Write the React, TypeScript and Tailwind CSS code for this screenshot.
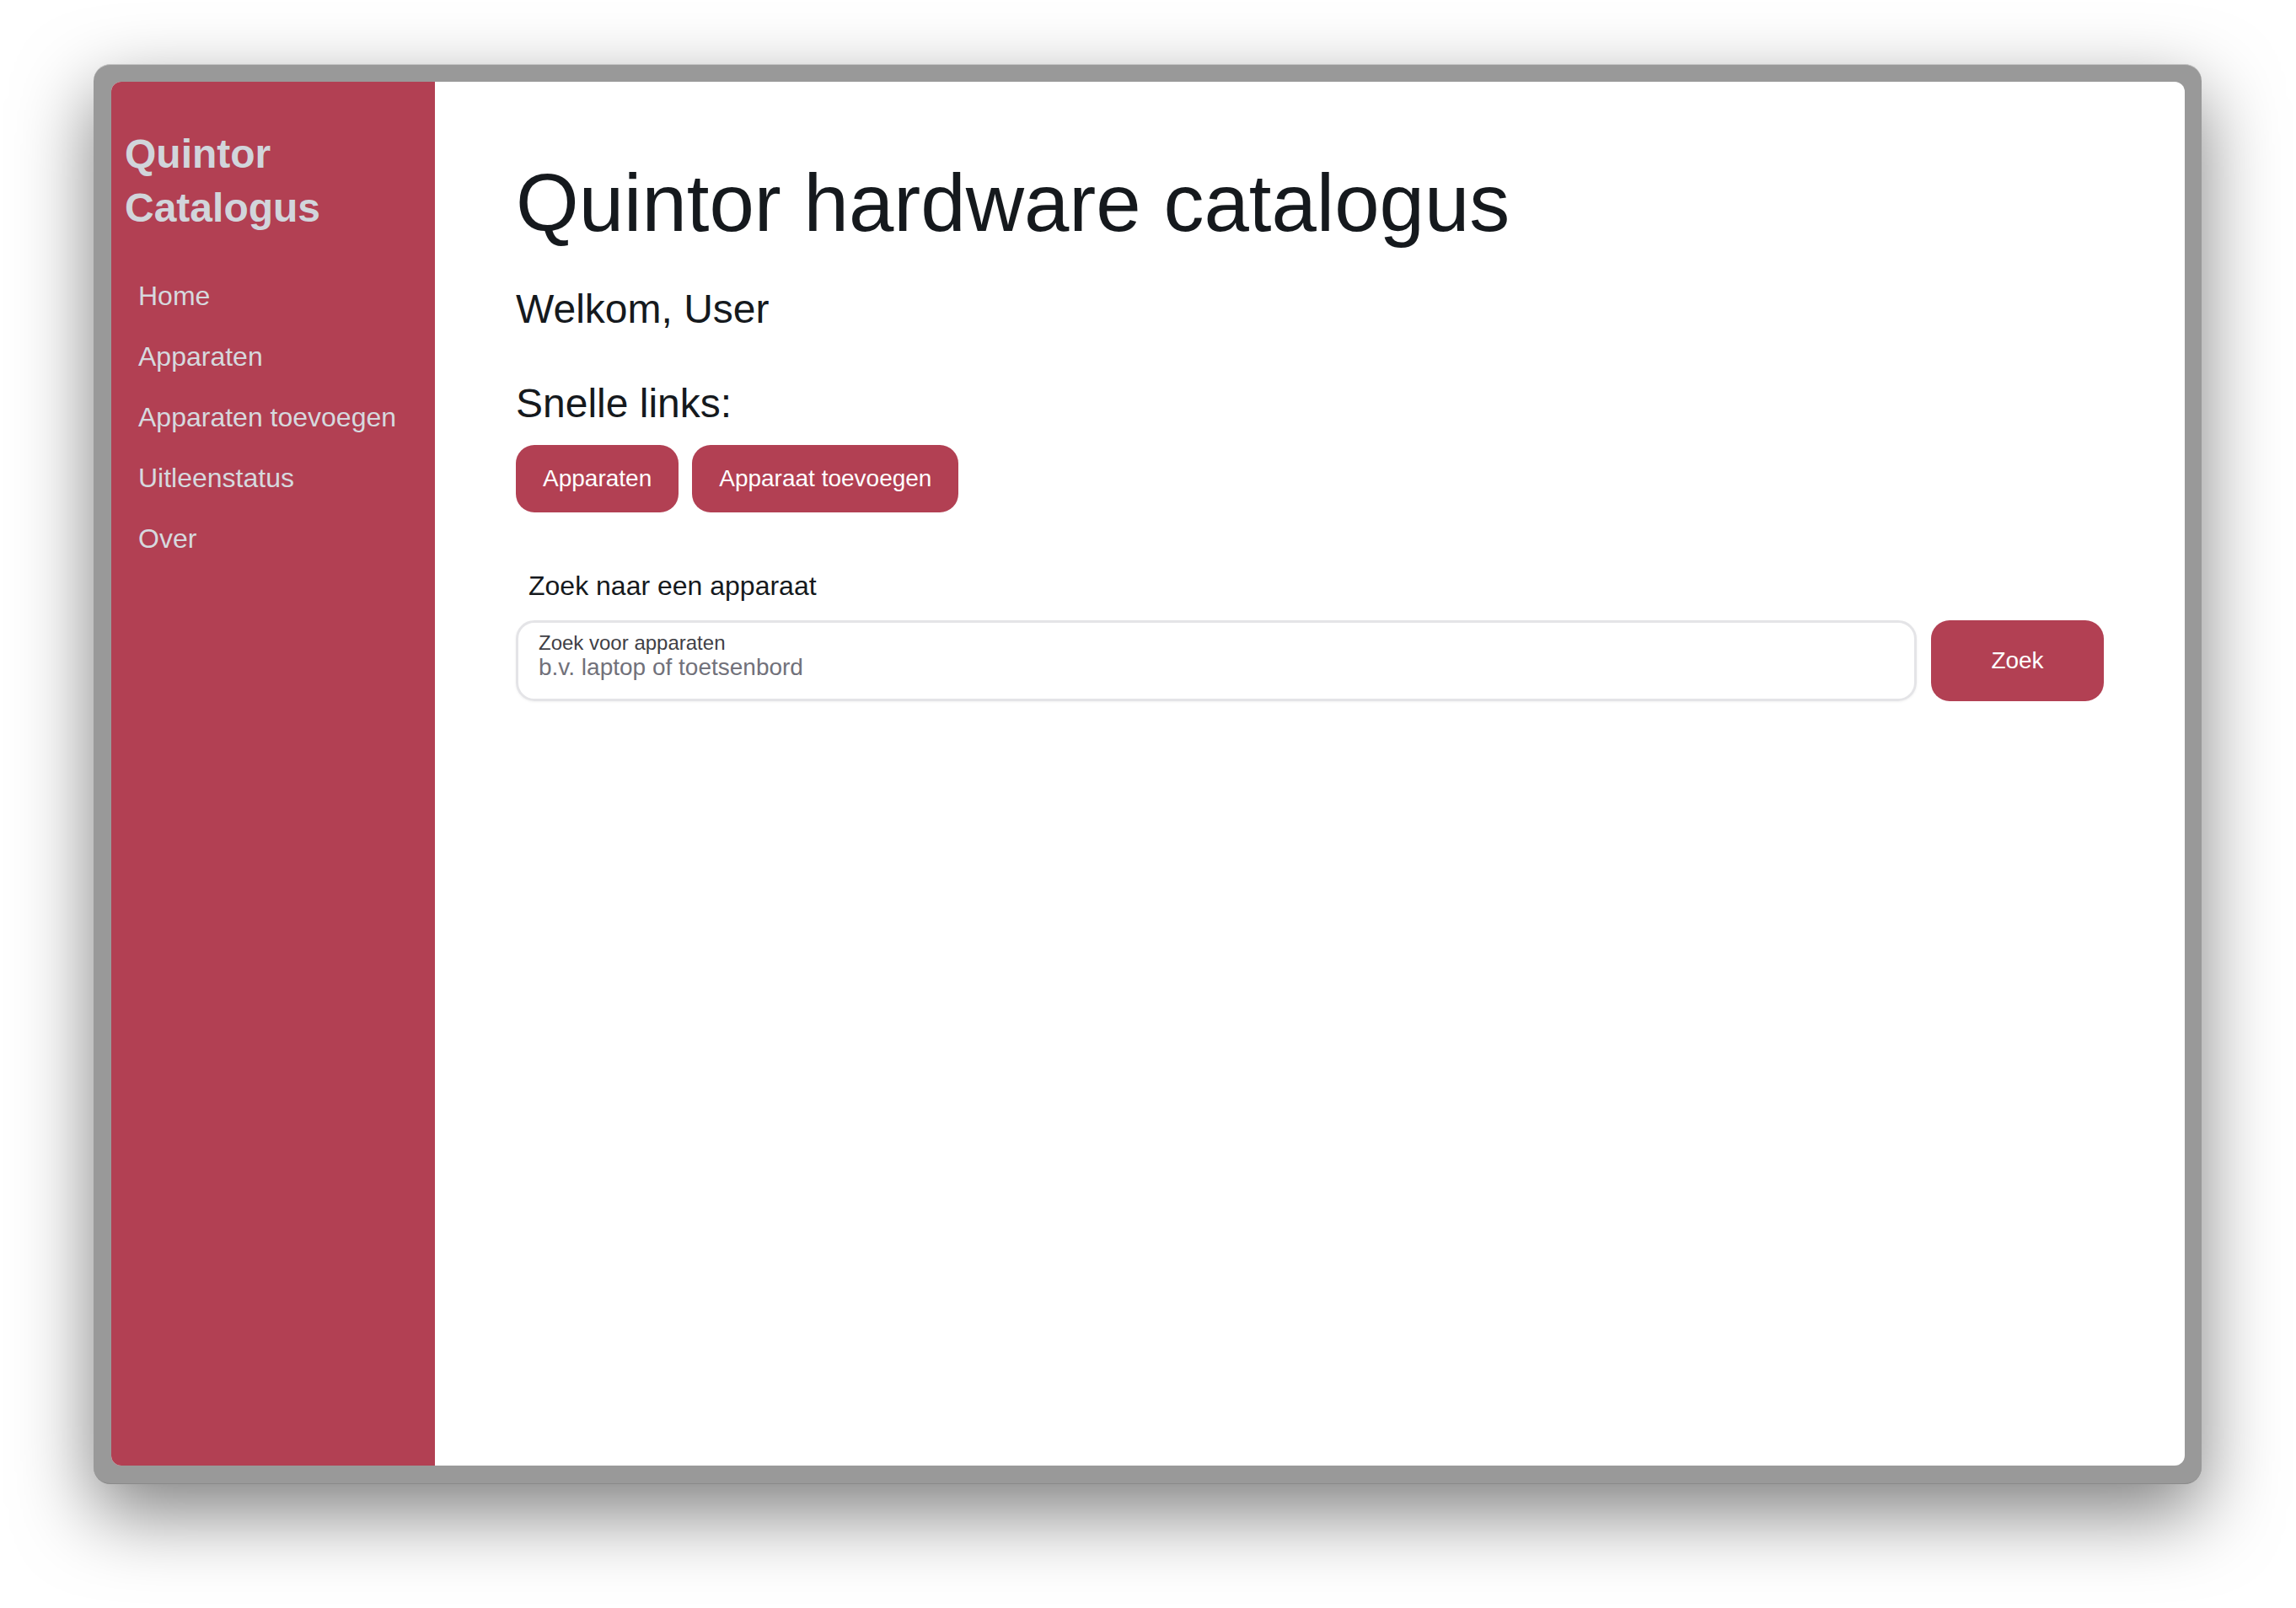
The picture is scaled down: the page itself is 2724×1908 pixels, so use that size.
const navItems = ["Home", "Apparaten", "Apparaten toevoegen", "Uitleenstatus", "Over"]

export default function App() {
  return (
    <div className="w-[2724px] h-[1908px] bg-white pt-[76px] pl-[111px] font-['Liberation_Sans',Arial,sans-serif]">
      {/* device frame */}
      <div className="w-[2501px] h-[1685px] rounded-[20px] bg-[#999999] pt-[20px] pb-[21px] pl-[21px] pr-[20px] shadow-[0_34px_90px_rgba(0,0,0,0.5)] border-t border-t-[#c4c4c4] border-b border-b-[#8a8a8a]">
        <div className="flex h-full rounded-[12px] overflow-hidden bg-white">
          {/* sidebar */}
          <aside className="w-[384px] shrink-0 bg-[#b24053] pt-[54px] pl-[16px]">
            <h1 className="text-[48px] leading-[64px] font-bold text-[#d1d5db]">
              <span className="block">Quintor</span>
              <span className="block">Catalogus</span>
            </h1>
            <nav className="mt-[36px] pl-[16px] flex flex-col">
              {navItems.map((item) => (
                <a key={item} href="#" className="text-[32px] leading-[72px] text-[#d6d9de]">
                  {item}
                </a>
              ))}
            </nav>
          </aside>

          {/* main content */}
          <main className="flex-1 px-[96px] pt-[86px] text-[#15191d]">
            <h2 className="text-[96px] leading-[116px]">Quintor hardware catalogus</h2>
            <p className="mt-[39px] text-[48px] leading-[58px]">Welkom, User</p>
            <p className="mt-[54px] text-[48px] leading-[58px]">Snelle links:</p>
            <div className="mt-[20px] flex gap-[16px]">
              <button className="h-[80px] px-[32px] rounded-[22px] bg-[#b24053] text-white text-[28px]">
                Apparaten
              </button>
              <button className="h-[80px] px-[32px] rounded-[22px] bg-[#b24053] text-white text-[28px]">
                Apparaat toevoegen
              </button>
            </div>

            <p className="mt-[63px] pl-[15px] text-[32px] leading-[48px]">Zoek naar een apparaat</p>
            <div className="mt-[17px] flex gap-[17px]">
              <label className="flex-1 h-[96px] rounded-[22px] border-[3px] border-[#e4e4e7] pl-[24px] pt-[11px] flex flex-col shadow-[0_1px_3px_rgba(0,0,0,0.06)]">
                <span className="text-[24px] leading-[26px] text-[#3f3f46]">Zoek voor apparaten</span>
                <input
                  className="text-[28px] leading-[32px] h-[32px] outline-none text-[#18181b] placeholder:text-[#71717a]"
                  placeholder="b.v. laptop of toetsenbord"
                />
              </label>
              <button className="w-[205px] h-[96px] rounded-[22px] bg-[#b24053] text-white text-[28px]">Zoek</button>
            </div>
          </main>
        </div>
      </div>
    </div>
  )
}
